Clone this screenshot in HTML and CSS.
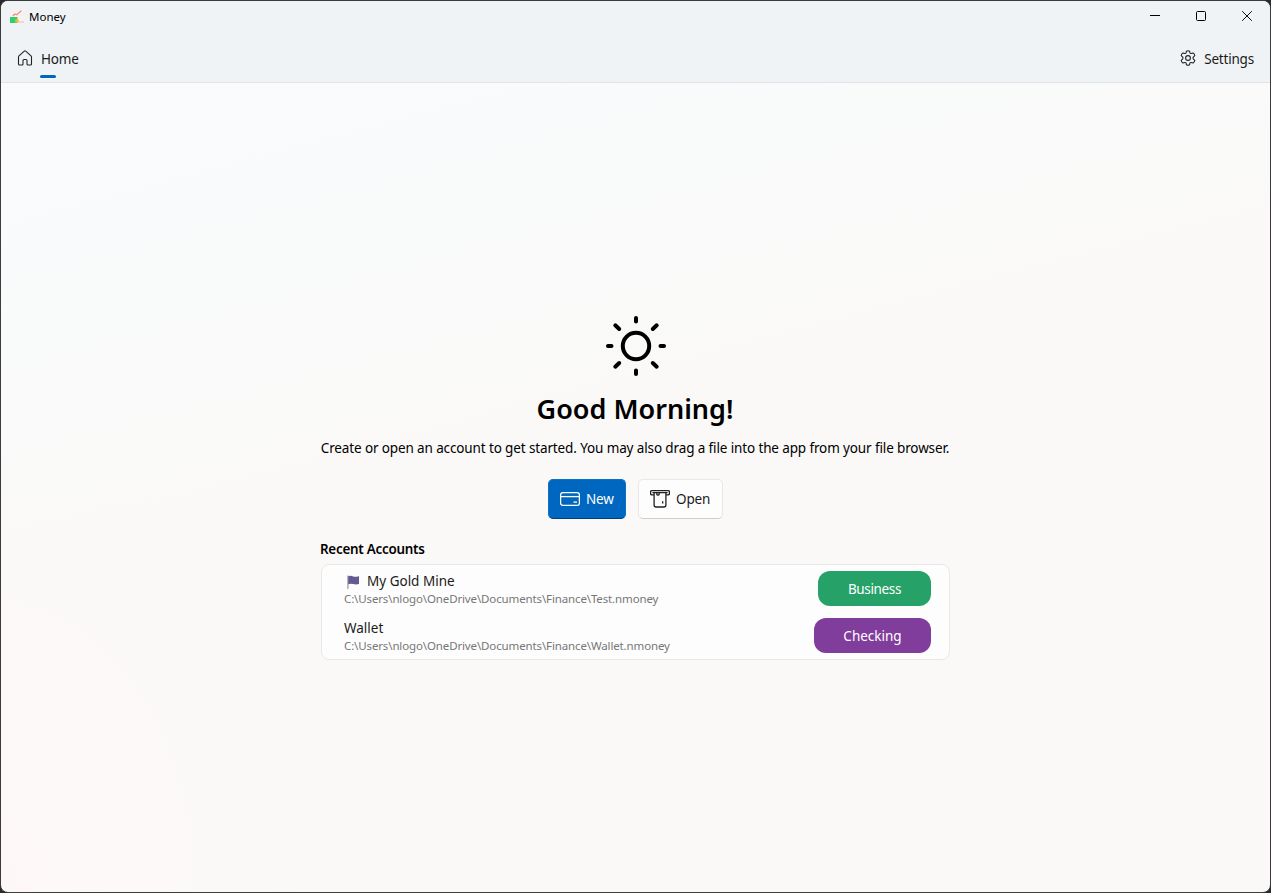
FILE: index.html
```html
<!DOCTYPE html>
<html lang="en">
<head>
<meta charset="utf-8">
<title>Money</title>
<link rel="stylesheet" href="styles.css">
</head>
<body>
<div class="window">
  <header class="header">
    <div class="titlebar">
      <svg class="logo" width="14" height="14" viewBox="0 0 14 14"><rect x="1" y="0" width="13" height="13" fill="#f8f1f0"/><path d="M2.800 6l2-2 1.800.800 4.800-4" fill="none" stroke="#ec8c8c" stroke-width="1.200"/><rect x="0" y="7" width="7.500" height="6" fill="#2fcf70"/><rect x="7.500" y="11" width="6.500" height="2" fill="#f0d5d3"/><circle cx="6.800" cy="10.800" r="1.900" fill="#efb92e"/></svg>
      <span class="title">Money</span>
      <div class="controls">
        <svg width="46" height="32" viewBox="0 0 46 32"><path d="M18 15.500h10" stroke="#000"/></svg>
        <svg width="46" height="32" viewBox="0 0 46 32"><rect x="18.500" y="11.500" width="9" height="9" rx="1" fill="none" stroke="#000"/></svg>
        <svg width="46" height="32" viewBox="0 0 46 32"><path d="M18.200 11.200l9.600 9.600M27.800 11.200l-9.600 9.600" stroke="#111"/></svg>
      </div>
    </div>
    <nav class="nav">
      <a class="nav-item home">
        <svg width="16" height="16" viewBox="0 0 16 16"><path d="M1.500 6.900Q1.500 6.300 2 5.800L7.300 1.100Q8 .5 8.700 1.100L14 5.800Q14.500 6.300 14.500 6.900V14Q14.500 15 13.500 15H11Q10 15 10 14V10.500Q10 9.500 9 9.500H7Q6 9.500 6 10.500V14Q6 15 5 15H2.500Q1.500 15 1.500 14Z" fill="none" stroke="#222" stroke-width="1.100"/></svg>
        <span class="home-label">Home</span>
      </a>
      <a class="nav-item settings">
        <svg width="16" height="16" viewBox="0 0 16 16"><path d="M6.400 1.200Q8 .2 9.600 1.200L9.900 3Q10.400 3.600 11.200 3.500L13 2.900Q14.600 3.900 14.800 5.700L13.300 7.100Q12.800 8 13.300 8.900L14.800 10.300Q14.400 12.200 13 13.100L11.200 12.500Q10.300 12.400 9.900 13L9.600 14.800Q8 15.800 6.400 14.800L6.100 13Q5.700 12.400 4.800 12.500L3 13.100Q1.600 12.200 1.200 10.300L2.700 8.900Q3.200 8 2.700 7.100L1.200 5.700Q1.400 3.900 3 2.900L4.800 3.500Q5.600 3.600 6.100 3Z" fill="none" stroke="#222" stroke-width="1.100" stroke-linejoin="round"/><circle cx="8" cy="8" r="2.400" fill="none" stroke="#222" stroke-width="1.100"/></svg>
        <span class="settings-label">Settings</span>
      </a>
    </nav>
  </header>
  <main class="content">
    <svg class="sun" width="60" height="60" viewBox="0 0 60 60" fill="none" stroke="#000" stroke-width="4" stroke-linecap="round"><circle cx="30" cy="30" r="13.200"/><path d="M30 2v3.500M30 54.500V58M2 30h3.500M54.500 30H58M9.300 9.300l3.900 3.700M50.700 9.300l-3.900 3.700M9.300 50.700l3.900-3.700M50.700 50.700l-3.900-3.700"/></svg>
    <h1 class="greeting">Good Morning!</h1>
    <p class="hint">Create or open an account to get started. You may also drag a file into the app from your file browser.</p>
    <div class="actions">
      <button class="btn primary">
        <svg width="20" height="20" viewBox="0 0 20 20" fill="none" stroke="#fff" stroke-width="1.300"><rect x=".6" y="3.600" width="18.800" height="12.800" rx="2.200"/><path d="M.6 7.600h18.800"/><path d="M13.500 13.100h3.500"/></svg>
        <span>New</span>
      </button>
      <button class="btn">
        <svg width="20" height="20" viewBox="0 0 20 20" fill="none" stroke="#222" stroke-width="1.300"><path d="M4 5.800H1.800Q.6 5.800 .6 4.600V2.800Q.6 1.600 1.800 1.600H18.200Q19.400 1.600 19.400 2.800V4.600Q19.400 5.800 18.200 5.800H16"/><path d="M2.500 3.700h15M4.100 3.700V16Q4.100 18 6.100 18H13.900Q15.900 18 15.900 16V3.700M6.800 3.700v1.500q0 .8.800.8h.8q.8 0 .8-.8V3.700M12.700 12.200v2.200"/></svg>
        <span>Open</span>
      </button>
    </div>
    <section class="recent">
      <h2 class="recent-title">Recent Accounts</h2>
      <div class="card">
        <div class="row">
          <div class="info">
            <div class="name gold"><svg class="flag" width="13" height="14" viewBox="0 0 13 14"><path d="M.9.5V14" stroke="#999" stroke-width="1.200"/><path d="M1.200 1.300Q3.500.3 6.200 1.400T12 1V9Q9 9.800 6.200 9T1.200 9.200Z" fill="#635994"/></svg><span>My Gold Mine</span></div>
            <div class="path">C:\Users\nlogo\OneDrive\Documents\Finance\Test.nmoney</div>
          </div>
          <div class="tag business">Business</div>
        </div>
        <div class="row">
          <div class="info">
            <div class="name">Wallet</div>
            <div class="path">C:\Users\nlogo\OneDrive\Documents\Finance\Wallet.nmoney</div>
          </div>
          <div class="tag checking">Checking</div>
        </div>
      </div>
    </section>
  </main>
</div>
</body>
</html>
```
FILE: styles.css
```css
* { box-sizing: border-box; }
html, body { margin: 0; height: 100%; }
body { background: #2b292b; font-family: "Noto Sans", "Open Sans", sans-serif; font-size: 13.5px; color: #1b1b1b; overflow: hidden; white-space: nowrap; }
svg { display: block; flex: none; }
.window { width: 1271px; height: 893px; border: 1px solid #3d3b3d; border-radius: 8px; overflow: hidden; display: flex; flex-direction: column;
  background: radial-gradient(ellipse 300px 450px at 0 100%, #fdf8f7, rgba(253,248,247,0)), linear-gradient(165deg, #f9fbfd 0%, #f9fbfc 15%, #faf9f8 45%); }
.header { height: 82px; background: #eff3f6; border-bottom: 1px solid #e0e4e6; }
.titlebar { height: 31px; display: flex; align-items: center; padding-left: 9px; }
.title { margin-left: 5px; padding-top: 1px; font-size: 11.5px; line-height: 16px; color: #000; }
.controls { display: flex; margin: -1px 0 0 auto; }
.nav { display: flex; justify-content: space-between; padding: 9px 16px 0; }
.nav-item { display: flex; gap: 8px; align-items: center; height: 37px; position: relative; }
.nav-item svg { margin-top: -4px; }
.nav-item span { line-height: 20px; margin-top: -2px; }
.home-label { letter-spacing: -.2px; }
.settings-label { letter-spacing: -.2px; }
.home::after { content: ""; position: absolute; left: 23px; bottom: 0; width: 16px; height: 3px; border-radius: 2px; background: #0067c0; }
.content { flex: 1; display: flex; flex-direction: column; align-items: center; padding-top: 233px; }
.greeting { margin: 13px 1px 0 0; height: 40px; line-height: 40px; font-size: 27px; font-weight: 600; color: #000; }
.hint { margin: 9px 1px 0 0; height: 20px; line-height: 20px; letter-spacing: -.125px; color: #000; }
.actions { display: flex; gap: 12px; margin-top: 21px; }
.btn { height: 40px; width: 85px; padding: 0 0 0 11px; display: flex; align-items: center; gap: 6px; border: 1px solid #e9e8e7; border-bottom-color: #cfcecd; border-radius: 5px; background: #fdfdfd; font: inherit; letter-spacing: -.15px; color: #1b1b1b; }
.primary { width: 78px; background: #0067c0; border-color: #0f6fc5; border-bottom-color: #003e73; color: #fff; }
.recent { width: 630px; margin: 20px 1px 0 0; }
.recent-title { margin: 0; height: 20px; line-height: 20px; font-size: 13.4px; font-weight: 600; letter-spacing: -.25px; color: #000; }
.card { margin: 5px 0 0 1px; height: 96px; width: 629px; border: 1px solid #e9e8e7; border-radius: 8px; background: #fdfdfd; padding: 0 18px 0 22px; }
.row { height: 47px; display: flex; justify-content: space-between; align-items: center; }
.info { padding-top: 2px; }
.name { display: flex; align-items: center; height: 19px; line-height: 19px; }
.flag { margin: 0 7px 0 3px; }
.path { height: 16px; line-height: 16px; font-size: 11.5px; letter-spacing: -.13px; color: #777; }
.tag { height: 35px; border-radius: 12px; color: #fff; display: flex; align-items: center; justify-content: center; }
.business { width: 113px; background: #26a269; letter-spacing: -.35px; }
.checking { width: 117px; background: #813d9c; }
```
